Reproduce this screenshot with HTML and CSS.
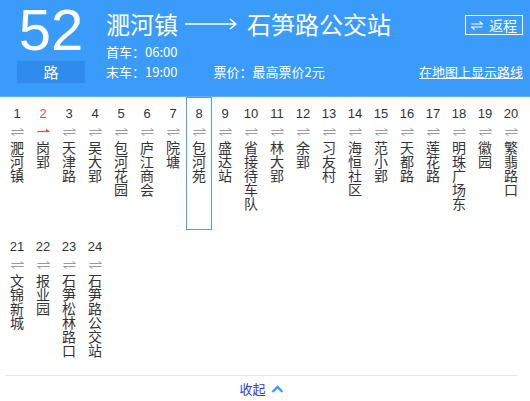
FILE: index.html
```html
<!DOCTYPE html>
<html lang="zh-CN">
<head>
<meta charset="utf-8">
<title>52路</title>
<link rel="stylesheet" href="styles.css">
</head>
<body>
<header class="hd">
  <div class="line-no">
    <div class="big">52</div>
    <div class="lu">路</div>
  </div>
  <div class="main">
    <div class="top">
      <div class="title">
        <span>淝河镇</span>
        <svg class="dir" width="52" height="12" viewBox="0 0 52 12"><path d="M0 6H50.5M45 1L50.8 6L45 11" fill="none" stroke="#fff" stroke-width="1.6"/></svg>
        <span>石笋路公交站</span>
      </div>
      <a class="back"><svg width="12" height="9" viewBox="0 0 12 9"><path d="M0.5 3H11.5L8.5 0.5M11.5 6H0.5L3.5 8.5" fill="none" stroke="#fff" stroke-width="1.2"/></svg><span>返程</span></a>
    </div>
    <div class="info">首车：06:00</div>
    <div class="info row2">
      <span>末车：19:00</span>
      <span class="price">票价：最高票价2元</span>
      <a class="map">在地图上显示路线</a>
    </div>
  </div>
</header>

<div class="stations">
  <div class="st"><div class="no">1</div><svg class="ar" width="13" height="8" viewBox="0 0 13 8"><path d="M0.5 2.5H12.5L9.5 0.3M12.5 5.5H0.5L3.5 7.7" fill="none" stroke="#9a9a9a" stroke-width="1"/></svg><div class="nm">淝河镇</div></div>
  <div class="st cur"><div class="no">2</div><svg class="ar" width="13" height="8" viewBox="0 0 13 8"><path d="M0.5 3.5H12.5" fill="none" stroke="#f0484e" stroke-width="1.3"/><path d="M9 0.8L12.8 3.5H9Z" fill="#f0484e"/></svg><div class="nm">岗郢</div></div>
  <div class="st"><div class="no">3</div><svg class="ar" width="13" height="8" viewBox="0 0 13 8"><path d="M0.5 2.5H12.5L9.5 0.3M12.5 5.5H0.5L3.5 7.7" fill="none" stroke="#9a9a9a" stroke-width="1"/></svg><div class="nm">天津路</div></div>
  <div class="st"><div class="no">4</div><svg class="ar" width="13" height="8" viewBox="0 0 13 8"><path d="M0.5 2.5H12.5L9.5 0.3M12.5 5.5H0.5L3.5 7.7" fill="none" stroke="#9a9a9a" stroke-width="1"/></svg><div class="nm">吴大郢</div></div>
  <div class="st"><div class="no">5</div><svg class="ar" width="13" height="8" viewBox="0 0 13 8"><path d="M0.5 2.5H12.5L9.5 0.3M12.5 5.5H0.5L3.5 7.7" fill="none" stroke="#9a9a9a" stroke-width="1"/></svg><div class="nm">包河花园</div></div>
  <div class="st"><div class="no">6</div><svg class="ar" width="13" height="8" viewBox="0 0 13 8"><path d="M0.5 2.5H12.5L9.5 0.3M12.5 5.5H0.5L3.5 7.7" fill="none" stroke="#9a9a9a" stroke-width="1"/></svg><div class="nm">庐江商会</div></div>
  <div class="st"><div class="no">7</div><svg class="ar" width="13" height="8" viewBox="0 0 13 8"><path d="M0.5 2.5H12.5L9.5 0.3M12.5 5.5H0.5L3.5 7.7" fill="none" stroke="#9a9a9a" stroke-width="1"/></svg><div class="nm">院塘</div></div>
  <div class="st sel"><div class="no">8</div><svg class="ar" width="13" height="8" viewBox="0 0 13 8"><path d="M0.5 2.5H12.5L9.5 0.3M12.5 5.5H0.5L3.5 7.7" fill="none" stroke="#9a9a9a" stroke-width="1"/></svg><div class="nm">包河苑</div></div>
  <div class="st"><div class="no">9</div><svg class="ar" width="13" height="8" viewBox="0 0 13 8"><path d="M0.5 2.5H12.5L9.5 0.3M12.5 5.5H0.5L3.5 7.7" fill="none" stroke="#9a9a9a" stroke-width="1"/></svg><div class="nm">盛达站</div></div>
  <div class="st"><div class="no">10</div><svg class="ar" width="13" height="8" viewBox="0 0 13 8"><path d="M0.5 2.5H12.5L9.5 0.3M12.5 5.5H0.5L3.5 7.7" fill="none" stroke="#9a9a9a" stroke-width="1"/></svg><div class="nm">省接待车队</div></div>
  <div class="st"><div class="no">11</div><svg class="ar" width="13" height="8" viewBox="0 0 13 8"><path d="M0.5 2.5H12.5L9.5 0.3M12.5 5.5H0.5L3.5 7.7" fill="none" stroke="#9a9a9a" stroke-width="1"/></svg><div class="nm">林大郢</div></div>
  <div class="st"><div class="no">12</div><svg class="ar" width="13" height="8" viewBox="0 0 13 8"><path d="M0.5 2.5H12.5L9.5 0.3M12.5 5.5H0.5L3.5 7.7" fill="none" stroke="#9a9a9a" stroke-width="1"/></svg><div class="nm">余郢</div></div>
  <div class="st"><div class="no">13</div><svg class="ar" width="13" height="8" viewBox="0 0 13 8"><path d="M0.5 2.5H12.5L9.5 0.3M12.5 5.5H0.5L3.5 7.7" fill="none" stroke="#9a9a9a" stroke-width="1"/></svg><div class="nm">习友村</div></div>
  <div class="st"><div class="no">14</div><svg class="ar" width="13" height="8" viewBox="0 0 13 8"><path d="M0.5 2.5H12.5L9.5 0.3M12.5 5.5H0.5L3.5 7.7" fill="none" stroke="#9a9a9a" stroke-width="1"/></svg><div class="nm">海恒社区</div></div>
  <div class="st"><div class="no">15</div><svg class="ar" width="13" height="8" viewBox="0 0 13 8"><path d="M0.5 2.5H12.5L9.5 0.3M12.5 5.5H0.5L3.5 7.7" fill="none" stroke="#9a9a9a" stroke-width="1"/></svg><div class="nm">范小郢</div></div>
  <div class="st"><div class="no">16</div><svg class="ar" width="13" height="8" viewBox="0 0 13 8"><path d="M0.5 2.5H12.5L9.5 0.3M12.5 5.5H0.5L3.5 7.7" fill="none" stroke="#9a9a9a" stroke-width="1"/></svg><div class="nm">天都路</div></div>
  <div class="st"><div class="no">17</div><svg class="ar" width="13" height="8" viewBox="0 0 13 8"><path d="M0.5 2.5H12.5L9.5 0.3M12.5 5.5H0.5L3.5 7.7" fill="none" stroke="#9a9a9a" stroke-width="1"/></svg><div class="nm">莲花路</div></div>
  <div class="st"><div class="no">18</div><svg class="ar" width="13" height="8" viewBox="0 0 13 8"><path d="M0.5 2.5H12.5L9.5 0.3M12.5 5.5H0.5L3.5 7.7" fill="none" stroke="#9a9a9a" stroke-width="1"/></svg><div class="nm">明珠广场东</div></div>
  <div class="st"><div class="no">19</div><svg class="ar" width="13" height="8" viewBox="0 0 13 8"><path d="M0.5 2.5H12.5L9.5 0.3M12.5 5.5H0.5L3.5 7.7" fill="none" stroke="#9a9a9a" stroke-width="1"/></svg><div class="nm">徽园</div></div>
  <div class="st"><div class="no">20</div><svg class="ar" width="13" height="8" viewBox="0 0 13 8"><path d="M0.5 2.5H12.5L9.5 0.3M12.5 5.5H0.5L3.5 7.7" fill="none" stroke="#9a9a9a" stroke-width="1"/></svg><div class="nm">繁翡路口</div></div>
  <div class="st"><div class="no">21</div><svg class="ar" width="13" height="8" viewBox="0 0 13 8"><path d="M0.5 2.5H12.5L9.5 0.3M12.5 5.5H0.5L3.5 7.7" fill="none" stroke="#9a9a9a" stroke-width="1"/></svg><div class="nm">文锦新城</div></div>
  <div class="st"><div class="no">22</div><svg class="ar" width="13" height="8" viewBox="0 0 13 8"><path d="M0.5 2.5H12.5L9.5 0.3M12.5 5.5H0.5L3.5 7.7" fill="none" stroke="#9a9a9a" stroke-width="1"/></svg><div class="nm">报业园</div></div>
  <div class="st"><div class="no">23</div><svg class="ar" width="13" height="8" viewBox="0 0 13 8"><path d="M0.5 2.5H12.5L9.5 0.3M12.5 5.5H0.5L3.5 7.7" fill="none" stroke="#9a9a9a" stroke-width="1"/></svg><div class="nm">石笋松林路口</div></div>
  <div class="st"><div class="no">24</div><svg class="ar" width="13" height="8" viewBox="0 0 13 8"><path d="M0.5 2.5H12.5L9.5 0.3M12.5 5.5H0.5L3.5 7.7" fill="none" stroke="#9a9a9a" stroke-width="1"/></svg><div class="nm">石笋路公交站</div></div>
</div>

<div class="sep"></div>
<div class="fold"><a class="fold-link">收起<svg width="13" height="8" viewBox="0 0 13 8"><path d="M1.5 7L6.5 2L11.5 7" fill="none" stroke="#3a9bfa" stroke-width="2.4"/></svg></a></div>
</body>
</html>
```

FILE: styles.css
```css
* { box-sizing: border-box; }
body {
  margin: 0;
  background: #fff;
  font-family: "Noto Sans CJK SC", "Liberation Sans", sans-serif;
  color: #333;
}
a { cursor: pointer; }

.hd {
  display: flex;
  height: 97px;
  background: #3a9bfa;
  border-bottom: 1px solid #62b0fc;
  color: #fff;
  padding-right: 7px;
}
.line-no {
  margin-left: 17px;
  width: 68px;
  display: flex;
  flex-direction: column;
}
.big {
  font-family: "Liberation Sans", sans-serif;
  font-size: 58px;
  line-height: 60px;
  text-align: center;
  white-space: nowrap;
}
.lu {
  margin-top: 1px;
  height: 22px;
  background: #2f8cec;
  font-size: 15px;
  line-height: 22px;
  text-align: center;
}
.main {
  flex: 1;
  margin-left: 21px;
  padding-top: 9px;
}
.top {
  display: flex;
  justify-content: space-between;
  align-items: flex-start;
  height: 33px;
}
.title {
  display: flex;
  align-items: center;
  font-size: 24px;
  line-height: 30px;
}
.dir { margin: 0 10px 0 7px; }
.back {
  margin-top: 6px;
  width: 58px;
  height: 20px;
  border: 1px solid #fff;
  display: flex;
  align-items: center;
  justify-content: center;
  gap: 6px;
  font-size: 14px;
  line-height: 18px;
}
.info {
  font-size: 13px;
  line-height: 20px;
}
.row2 { display: flex; }
.price { margin-left: 36px; }
.map {
  margin-left: auto;
  text-decoration: underline;
}

.stations {
  display: grid;
  grid-template-columns: repeat(20, 26px);
  grid-auto-rows: 133px;
  padding-left: 4px;
}
.st {
  border: 1px solid transparent;
  display: flex;
  flex-direction: column;
  align-items: center;
  padding-top: 8px;
}
.st.sel { border-color: #4d9ff0; }
.no {
  font-family: "Liberation Sans", sans-serif;
  font-size: 13px;
  line-height: 16px;
  color: #333;
}
.cur .no { color: #f0484e; }
.ar { margin-top: 6px; display: block; }
.nm {
  margin-top: 4px;
  width: 14px;
  font-size: 14px;
  line-height: 14px;
  word-break: break-all;
  color: #333;
}

.sep {
  margin: 12px 13px 0 5px;
  height: 1px;
  background: #e6e6e6;
}
.fold {
  display: flex;
  justify-content: center;
  margin-top: 3px;
  padding-right: 7px;
}
.fold-link {
  display: flex;
  align-items: center;
  gap: 5px;
  font-size: 13px;
  line-height: 20px;
  color: #2b3fd8;
}
```
